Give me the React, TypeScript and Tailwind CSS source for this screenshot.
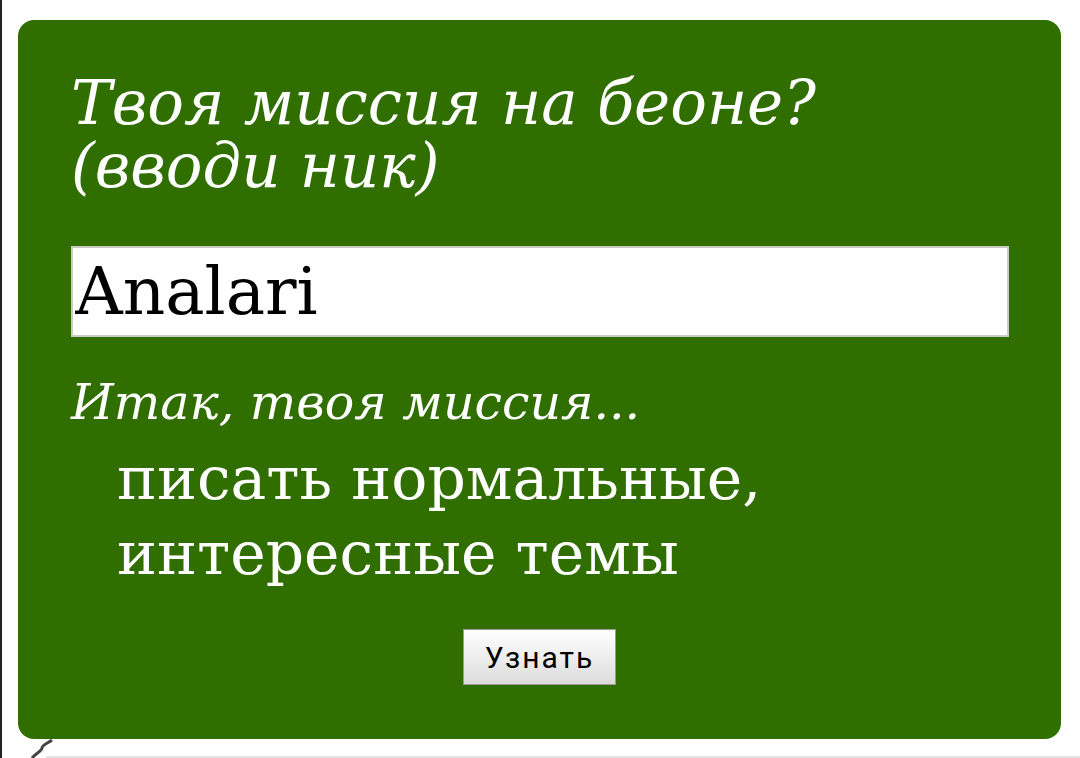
import React from 'react';

export default function App() {
  return (
    <div className="w-[1080px] h-[758px] bg-white border-l-2 border-[#222] overflow-hidden flex flex-col">
      <div className="mt-[20px] ml-[16px] w-[1043px] h-[719px] shrink-0 bg-[#306e00] rounded-[16px] px-[53px] pt-[51px] flex flex-col text-white">
        <h1 className="italic text-[61px] leading-[63px] font-normal font-['DejaVu_Serif',serif]">
          Твоя миссия на беоне?
          <br />
          (вводи ник)
        </h1>
        <input
          defaultValue="Analari"
          className="mt-[49px] w-[938px] h-[91px] shrink-0 bg-white border-2 border-[#c8ccc4] px-[2px] text-black text-[66px] outline-none font-['DejaVu_Serif',serif]"
        />
        <div className="mt-[40px] italic text-[49px] leading-[52px] font-['DejaVu_Serif',serif]">Итак, твоя миссия...</div>
        <div className="ml-[46px] mt-[12px] text-[60px] leading-[75px] font-['DejaVu_Serif',serif]">
          писать нормальные,
          <br />
          интересные темы
        </div>
        <div className="flex justify-center mt-[38px]">
          <button className="w-[153px] h-[56px] border border-[#9a9a9a] bg-gradient-to-b from-white to-[#dcdcdc] text-black text-[30px] tracking-[2px] font-['Roboto',sans-serif]">
            Узнать
          </button>
        </div>
      </div>
      <div className="relative h-[19px] shrink-0">
        <svg className="absolute left-[26px] top-0" width="26" height="19" viewBox="0 0 26 19">
          <path d="M24 1 C20 4, 14 6, 14 9 C14 12, 8 14, 4 19" stroke="#444" strokeWidth="3" fill="none" />
        </svg>
        <div className="absolute left-[44px] right-0 bottom-0 h-[2px] bg-[#e4e4e4]" />
      </div>
    </div>
  );
}
